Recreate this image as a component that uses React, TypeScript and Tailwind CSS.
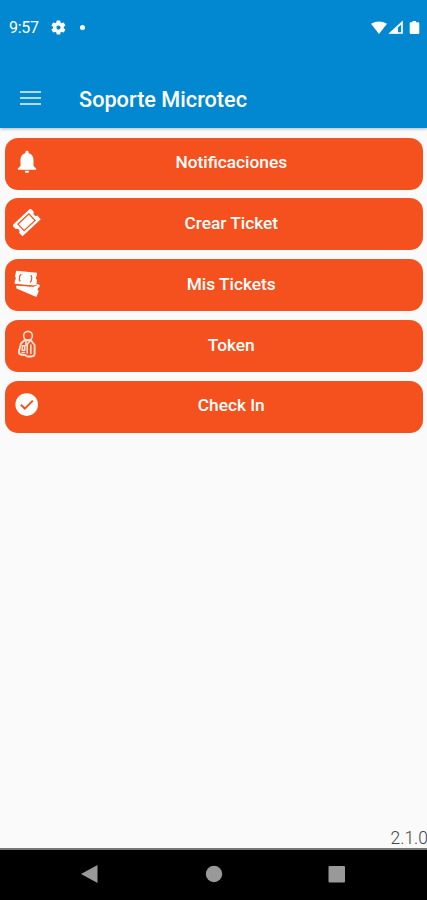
import type { ReactNode } from "react";

const BellIcon = () => (
  <svg width="26" height="26" viewBox="0 0 26 26" fill="white">
    <path d="M13 1.800c-1 0-1.700.7-1.700 1.600v.8C8.300 4.900 6.500 7.500 6.500 10.800v6.200l-2.700 2.400v1.300h18.400v-1.300L19.500 17v-6.200c0-3.300-1.800-5.900-4.800-6.600v-.8c0-.9-.7-1.600-1.700-1.600zM10.800 21.700a2.200 2.200 0 0 0 4.400 0z" />
  </svg>
);

const TicketIcon = () => (
  <svg width="28" height="28" viewBox="0 0 28 28">
    <g transform="translate(-.5 -.7) rotate(-43 14 14)">
      <path d="M1.500 6.500h25v5a2.600 2.600 0 0 0 0 5v5h-25v-5a2.600 2.600 0 0 0 0-5z" fill="white" />
      <rect x="6.500" y="9.500" width="15" height="9" fill="white" stroke="#f4511e" strokeWidth="1.200" />
    </g>
  </svg>
);

const TicketsIcon = () => (
  <svg width="28" height="28" viewBox="0 0 28 28">
    <path d="M3 15.500l17.500 1 3.500-2.500 3 1-.9 2.600-1.100.5-.3 2 1.100 1-2.400 6L3.500 18.500z" fill="white" />
    <path d="M3.200.8l20.800 2-.3 3.400-.8.900.2 1.800.9.800-.7 6.100L1.500 13.800l.5-3.800.8-1-.2-1.800-.6-.8z" fill="white" />
    <path d="M2.500 14.900l17.500 1.500 3.700-1.400" fill="none" stroke="#f4511e" strokeWidth=".9" />
    <path d="M8.300 4.100l-1.500 1.700-.5 4 1 1.500M17.800 5.100l1 1.900-.5 4-1.300 1.400" fill="none" stroke="#f4511e" strokeWidth="1.200" />
  </svg>
);

const TokenIcon = () => (
  <svg width="28" height="30" viewBox="0 0 28 30" fill="none" stroke="#ffe0d5" strokeLinecap="round" strokeLinejoin="round">
    <circle cx="15" cy="6.800" r="4.400" strokeWidth="1.600" />
    <path d="M11.700 11L8 14.500 5.900 22.500c-.2 2 .9 3 2.800 3.200l3.500.4 2 1.400h4.300c2 0 3.100-1 3.100-2.900V16l-3.700-4.700z" strokeWidth="1.900" fill="#f4511e" />
    <path d="M13 12.300v4M16.800 12l-2.600 3.500v8.500M17.800 16v8.500M9.500 16.800h2.300v4.500H9.200z" strokeWidth="1.600" />
    <path d="M9 23.500h2.500" strokeWidth="1.500" />
  </svg>
);

const CheckIcon = () => (
  <svg width="26" height="26" viewBox="0 0 26 26">
    <circle cx="12.700" cy="12.600" r="11.300" fill="white" />
    <path d="M6.900 12.800l3.900 3.900 8-8.100" fill="none" stroke="#f4511e" strokeWidth="2" />
  </svg>
);

const items: { label: string; icon: ReactNode }[] = [
  { label: "Notificaciones", icon: <BellIcon /> },
  { label: "Crear Ticket", icon: <TicketIcon /> },
  { label: "Mis Tickets", icon: <TicketsIcon /> },
  { label: "Token", icon: <TokenIcon /> },
  { label: "Check In", icon: <CheckIcon /> },
];

export default function App() {
  return (
    <div className="flex h-[900px] w-full flex-col overflow-hidden bg-[#fafafa] font-['Roboto','Liberation_Sans',sans-serif]">
      <header className="h-[128px] shrink-0 bg-[#0288d1] text-white shadow-[0_1px_3px_rgba(0,0,0,0.28)]">
        <div className="flex h-[56px] items-center pl-[9px] pr-[7px]">
          <span className="w-[41px] text-[16px] leading-none tracking-[-0.3px]">9:57</span>
          <svg width="17" height="17" viewBox="0 0 24 24" fill="white" className="-mt-[2px]">
            <path d="M19.400 13c.1-.7.1-1.300 0-2l2.100-1.600c.2-.2.300-.4.100-.7l-2-3.400c-.1-.2-.4-.3-.6-.2l-2.500 1c-.5-.4-1.100-.7-1.700-1l-.4-2.600c0-.3-.2-.5-.5-.5h-4c-.3 0-.5.2-.5.5L9 5.100c-.6.3-1.200.6-1.700 1l-2.500-1c-.2-.1-.5 0-.6.2l-2 3.400c-.2.3-.1.5.1.7L4.400 11c-.1.700-.1 1.300 0 2l-2.100 1.600c-.2.200-.3.400-.1.700l2 3.400c.1.200.4.300.6.200l2.500-1c.5.400 1.100.7 1.700 1l.4 2.600c0 .3.200.5.500.5h4c.3 0 .5-.2.5-.5l.4-2.600c.6-.3 1.200-.6 1.700-1l2.500 1c.2.1.5 0 .6-.2l2-3.400c.2-.3.100-.5-.1-.7zM12 15a3 3 0 1 1 0-6 3 3 0 0 1 0 6z" />
          </svg>
          <span className="-mt-[1px] ml-[13px] size-[5px] rounded-full bg-white" />
          <svg className="ml-auto" width="49" height="16" viewBox="0 0 49 16" fill="white">
            <path d="M0 3.800Q8 -1 16 3.800L8 14z" />
            <path d="M31 2.500v10.500H19.500z" fill="none" stroke="white" strokeWidth="1.700" />
            <path d="M27 6.500v7h-7z" />
            <path d="M41.500 1H45v1.300h2c.7 0 1.300.5 1.300 1.200v9.200c0 .7-.6 1.300-1.300 1.300h-7c-.7 0-1.300-.6-1.300-1.300V3.500c0-.7.600-1.200 1.300-1.200h1.500z" />
          </svg>
        </div>
        <div className="flex h-[72px] items-center pb-[4px] pl-[20px] pt-[20px]">
          <div className="mb-[5px] flex w-[21px] flex-col gap-[4px]">
            <span className="h-[2px] bg-[#b3dbf1]" />
            <span className="h-[2px] bg-[#b3dbf1]" />
            <span className="h-[2px] bg-[#b3dbf1]" />
          </div>
          <h1 className="ml-[38px] text-[21.700px] font-medium leading-none">Soporte Microtec</h1>
        </div>
      </header>
      <main className="flex grow flex-col gap-[8.800px] pl-[5px] pr-[4px] pt-[9.500px]">
        {items.map(({ label, icon }) => (
          <button key={label} type="button" className="flex h-[52px] items-center rounded-[13px] bg-[#f4511e] pb-[3px] pl-[7.500px] pr-[1px] text-white">
            <span className="flex w-[28px] shrink-0 justify-center">{icon}</span>
            <span className="grow pt-[1.600px] text-center text-[17.300px] font-medium leading-none">{label}</span>
          </button>
        ))}
        <p className="-mr-[5px] mb-[1px] mt-auto text-right text-[17.500px] font-light leading-none text-[#444]">2.1.0</p>
      </main>
      <nav className="flex h-[52px] shrink-0 items-center border-t-2 border-[#777] bg-black pb-[2px] pl-[81px]">
        <svg width="264" height="20" viewBox="0 0 264 20" fill="#999">
          <path d="M0 10L16.500 1v18z" />
          <circle cx="133" cy="10" r="8.200" />
          <rect x="247.500" y="2" width="16.500" height="16.500" rx="1" />
        </svg>
      </nav>
    </div>
  );
}
